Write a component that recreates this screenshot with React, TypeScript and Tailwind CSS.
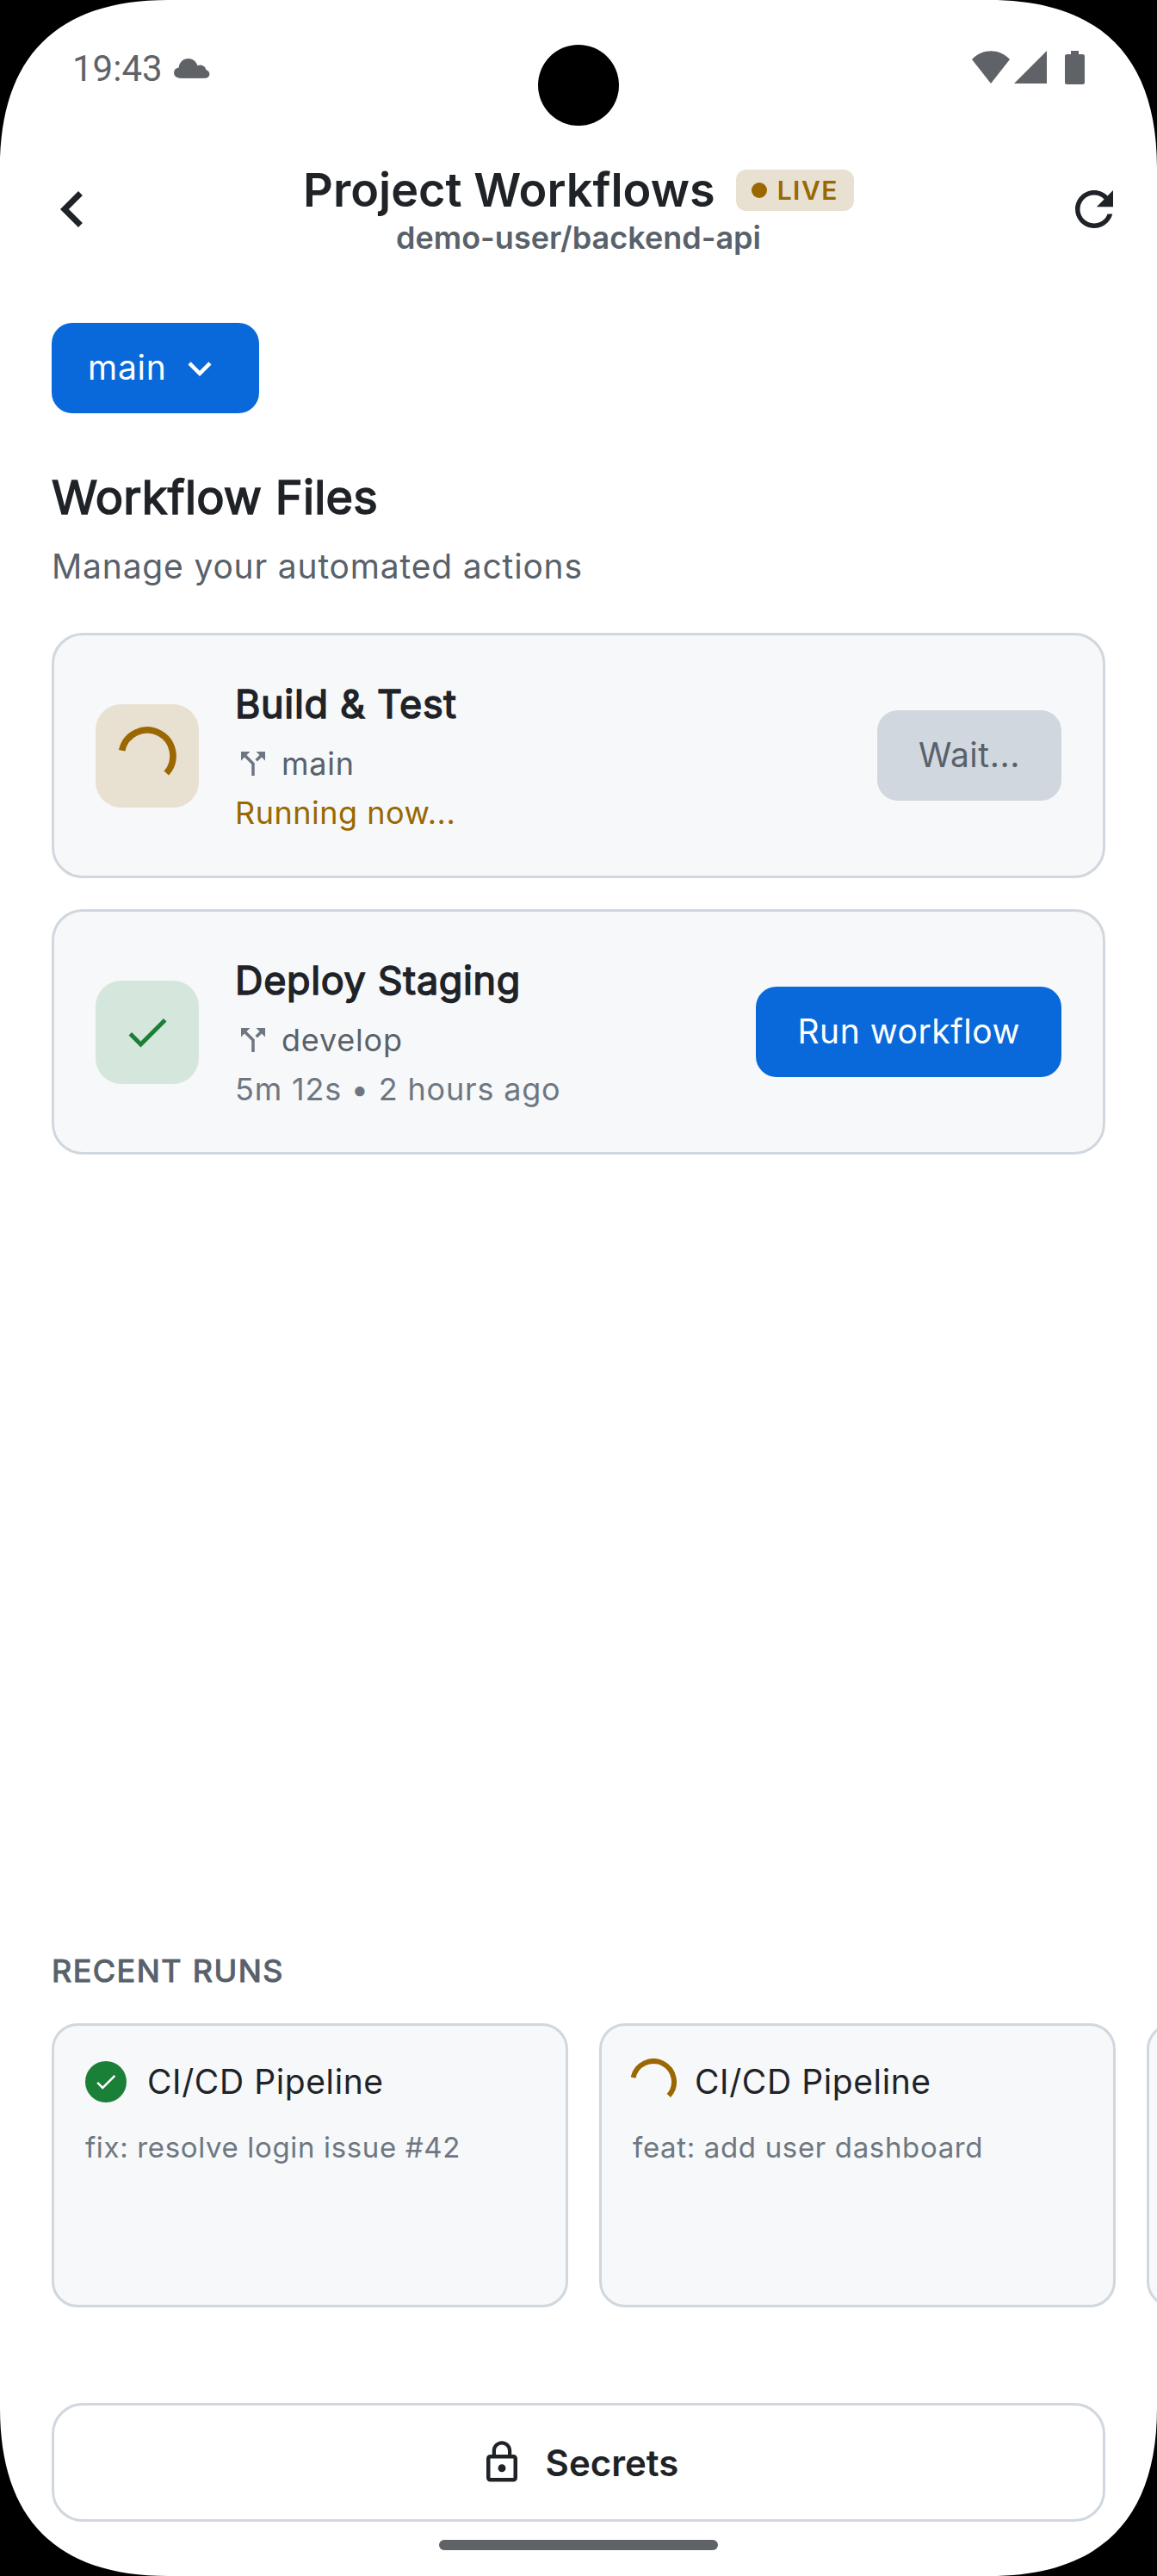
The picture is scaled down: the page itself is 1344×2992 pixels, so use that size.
import type { ReactNode } from 'react'

type Workflow = {
  name: string
  branch: string
  status: 'running' | 'success'
  detail: string
}

const workflows: Workflow[] = [
  { name: 'Build & Test', branch: 'main', status: 'running', detail: 'Running now...' },
  { name: 'Deploy Staging', branch: 'develop', status: 'success', detail: '5m 12s • 2 hours ago' },
]

const runs = [
  { id: 1, name: 'CI/CD Pipeline', message: 'fix: resolve login issue #42', status: 'success' },
  { id: 2, name: 'CI/CD Pipeline', message: 'feat: add user dashboard', status: 'running' },
  { id: 3, name: '', message: '', status: 'none' },
]

function Icon({ d, className }: { d: string; className: string }) {
  return (
    <svg viewBox="0 0 24 24" fill="currentColor" className={`shrink-0 ${className}`} aria-hidden="true">
      <path d={d} />
    </svg>
  )
}

const icons = {
  back: 'M15.41 7.41L14 6l-6 6 6 6 1.41-1.41L10.83 12z',
  refresh:
    'M17.65 6.35C16.2 4.9 14.21 4 12 4c-4.42 0-7.99 3.58-7.99 8s3.57 8 7.99 8c3.73 0 6.84-2.55 7.73-6h-2.08c-.82 2.33-3.04 4-5.65 4-3.31 0-6-2.69-6-6s2.69-6 6-6c1.66 0 3.14.69 4.22 1.78L13 11h7V4l-2.35 2.35z',
  down: 'M7.41 8.59L12 13.17l4.59-4.58L18 10l-6 6-6-6z',
  split: 'M14 4l2.29 2.29-2.88 2.88 1.42 1.42 2.88-2.88L20 10V4zm-4 0H4v6l2.29-2.29 4.71 4.7V20h2v-8.41l-5.29-5.3z',
  check: 'M9 16.17L4.83 12l-1.42 1.41L9 19 21 7l-1.41-1.41z',
  lock: 'M12 17c1.1 0 2-.9 2-2s-.9-2-2-2-2 .9-2 2 .9 2 2 2zm6-9h-1V6c0-2.76-2.24-5-5-5S7 3.24 7 6v2H6c-1.1 0-2 .9-2 2v10c0 1.1.9 2 2 2h12c1.1 0 2-.9 2-2V10c0-1.1-.9-2-2-2zM8.9 6c0-1.71 1.39-3.1 3.1-3.1s3.1 1.39 3.1 3.1v2H8.9V6zM18 20H6V10h12v10z',
}

// Black corner of the display, drawn over the screen
function Corner({ className }: { className: string }) {
  return (
    <svg viewBox="0 0 200 200" className={`absolute size-[200px] ${className}`} aria-hidden="true">
      <path d="M0 0H195C66 0 0 66 0 195z" fill="#000" />
    </svg>
  )
}

function StatusBar() {
  return (
    <div className="flex h-[156px] items-start justify-between px-[84px] pt-[59px] text-[#5f6368]">
      <div className="flex items-center">
        <span className="font-[Roboto,sans-serif] text-[42px] leading-[42px]">19:43</span>
        <svg viewBox="0 0 42 23" className="mb-[2px] ml-[13px] h-[23px] w-[42px]" fill="currentColor" aria-hidden="true">
          <circle cx="16.700" cy="11" r="11" />
          <circle cx="30.500" cy="14.500" r="7" />
          <circle cx="6" cy="16.500" r="6" />
          <circle cx="36.700" cy="18" r="4.700" />
          <path d="M6 12h28v10.700H6z" />
          <path d="M30 18h7v4.700H6z" />
        </svg>
      </div>
      <div className="flex">
        <svg viewBox="0 0 44 38" className="h-[38px] w-[44px]" fill="currentColor" aria-hidden="true">
          <path d="M0 10C12-3 32-3 44 10L22 38z" />
        </svg>
        <svg viewBox="0 0 38 38" className="ml-[5px] h-[38px] w-[38px]" fill="currentColor" aria-hidden="true">
          <path d="M38 0v38H0z" />
        </svg>
        <svg viewBox="0 0 23 39" className="ml-[21px] h-[39px] w-[23px]" fill="currentColor" aria-hidden="true">
          <path d="M7 0h9v4h4.500A2.500 2.500 0 0 1 23 6.500v30a2.500 2.500 0 0 1-2.500 2.500h-18A2.500 2.500 0 0 1 0 36.500v-30A2.500 2.500 0 0 1 2.500 4H7z" />
        </svg>
      </div>
    </div>
  )
}

function Header() {
  return (
    <header className="flex h-[180px] items-center justify-between pr-[39px] pb-[7px] pl-[42px] text-[#1f2328]">
      <button type="button" aria-label="Back">
        <Icon d={icons.back} className="size-[84px]" />
      </button>
      <div className="mt-[2px] flex flex-col items-center">
        <div className="flex items-center gap-[24px]">
          <h1 className="text-[54px] leading-[64px] font-semibold">Project Workflows</h1>
          <span className="flex h-[48px] items-center gap-[12px] rounded-[12px] bg-[#e8e0d1] px-[18px] text-[#9a6700]">
            <span className="size-[18px] rounded-full bg-[#9a6700]" />
            <span className="text-[30px] leading-[36px] font-semibold tracking-[1.5px]">LIVE</span>
          </span>
        </div>
        <p className="text-[36px] leading-[46px] font-semibold text-[#59616a]">demo-user/backend-api</p>
      </div>
      <button type="button" aria-label="Refresh" className="flex w-[87px] justify-end pr-px">
        <Icon d={icons.refresh} className="size-[66px]" />
      </button>
    </header>
  )
}

// Indeterminate progress ring, frozen part way round
function Spinner({ size, stroke }: { size: number; stroke: number }) {
  const r = size / 2
  const point = (deg: number) => {
    const a = (deg * Math.PI) / 180
    return `${r + r * Math.cos(a)} ${r + r * Math.sin(a)}`
  }
  return (
    <svg width={size} height={size} className="shrink-0 overflow-visible" aria-hidden="true">
      <path
        d={`M${point(192)}A${r} ${r} 0 1 1 ${point(42)}`}
        fill="none"
        stroke="#9a6700"
        strokeWidth={stroke}
      />
    </svg>
  )
}

function WorkflowCard({ workflow }: { workflow: Workflow }) {
  const running = workflow.status === 'running'
  return (
    <article className="flex h-[285px] items-center rounded-[36px] border-[3px] border-[#d0d7de] bg-[#f6f8fa] px-[48px]">
      <div
        className={`flex size-[120px] shrink-0 items-center justify-center rounded-[30px] ${
          running ? 'bg-[#e8e0d1]' : 'bg-[#d5e6dd]'
        }`}
      >
        {running ? <Spinner size={60} stroke={7.5} /> : <Icon d={icons.check} className="size-[60px] text-[#1a7f37]" />}
      </div>
      <div className="ml-[42px] flex-1">
        <h3 className="text-[45px] leading-[58px] tracking-[0.65px] text-[#1f2328] [-webkit-text-stroke:1.5px_#1f2328]">
          {workflow.name}
        </h3>
        <div className="mt-[18px] flex items-center gap-[12px]">
          <Icon d={icons.split} className="size-[42px] text-[#6e7781]" />
          <span className="text-[36px] leading-[44px] tracking-[0.8px] text-[#59616a]">{workflow.branch}</span>
        </div>
        <p
          className={`mt-[13px] text-[36px] leading-[44px] ${
            running ? 'tracking-[0.5px] text-[#9a6700]' : 'tracking-[0.8px] text-[#6e7781]'
          }`}
        >
          {workflow.detail}
        </p>
      </div>
      <button
        type="button"
        disabled={running}
        className={`h-[105px] rounded-[24px] px-[48px] text-[39px] tracking-[0.55px] ${
          running ? 'bg-[#d0d7de] text-[#59616a]' : 'bg-[#0969da] text-white'
        }`}
      >
        {running ? 'Wait...' : 'Run workflow'}
      </button>
    </article>
  )
}

function RunCard({ children }: { children?: ReactNode }) {
  return (
    <article className="h-[330px] w-[600px] shrink-0 rounded-[30px] border-[3px] border-[#d0d7de] bg-[#f6f8fa] px-[36px] pt-[41px]">
      {children}
    </article>
  )
}

export default function App() {
  return (
    <main className="relative flex h-[2992px] w-[1344px] flex-col overflow-hidden bg-white font-[Inter,sans-serif] font-[370]">
      <div className="absolute top-[52px] left-[625px] size-[94px] rounded-full bg-black" />
      <Corner className="top-0 left-0" />
      <Corner className="top-0 right-0 rotate-90" />
      <Corner className="right-0 bottom-0 rotate-180" />
      <Corner className="bottom-0 left-0 -rotate-90" />
      <StatusBar />
      <Header />

      <section className="px-[60px] pt-[39px]">
        <button
          type="button"
          className="flex h-[105px] w-[241px] items-center rounded-[24px] bg-[#0969da] pl-[42px] text-[39px] tracking-[0.75px] text-white"
        >
          main
          <Icon d={icons.down} className="ml-[11px] size-[54px]" />
        </button>
        <h2 className="mt-[65px] text-[54px] leading-[66px] tracking-[0.25px] text-[#1f2328] [-webkit-text-stroke:1.7px_#1f2328]">
          Workflow Files
        </h2>
        <p className="mt-[23px] text-[39px] leading-[48px] tracking-[0.82px] text-[#59616a]">
          Manage your automated actions
        </p>
        <div className="mt-[53px] flex flex-col gap-[36px]">
          {workflows.map(w => (
            <WorkflowCard key={w.name} workflow={w} />
          ))}
        </div>
      </section>

      <section className="mt-auto">
        <h2 className="px-[60px] text-[36px] leading-[44px] tracking-[1.5px] text-[#59616a] [-webkit-text-stroke:1.2px_#59616a]">
          RECENT RUNS
        </h2>
        <div className="mt-[39px] flex gap-[36px] pl-[60px]">
          {runs.map(run => (
            <RunCard key={run.id}>
              {run.status !== 'none' && (
                <>
                  <div className="flex items-center gap-[24px]">
                    {run.status === 'running' ? (
                      <Spinner size={48} stroke={6} />
                    ) : (
                      <span className="flex size-[48px] items-center justify-center rounded-full bg-[#1a7f37]">
                        <Icon d={icons.check} className="size-[30px] text-white" />
                      </span>
                    )}
                    <span className="text-[39px] leading-[48px] tracking-[0.6px] text-[#1f2328]">{run.name}</span>
                  </div>
                  <p className="mt-[32px] text-[33px] leading-[40px] tracking-[0.65px] text-[#6e7781]">{run.message}</p>
                </>
              )}
            </RunCard>
          ))}
        </div>
      </section>

      <footer className="mt-[111px] flex flex-col items-center px-[60px] pb-[30px]">
        <button
          type="button"
          className="flex h-[138px] w-full items-center justify-center gap-[24px] rounded-[36px] border-[3px] border-[#d0d7de] bg-white text-[42px] font-semibold text-[#1f2328]"
        >
          <Icon d={icons.lock} className="size-[54px]" />
          Secrets
        </button>
        <div className="mt-[21px] h-[12px] w-[324px] rounded-full bg-[#5f6368]" />
      </footer>
    </main>
  )
}
